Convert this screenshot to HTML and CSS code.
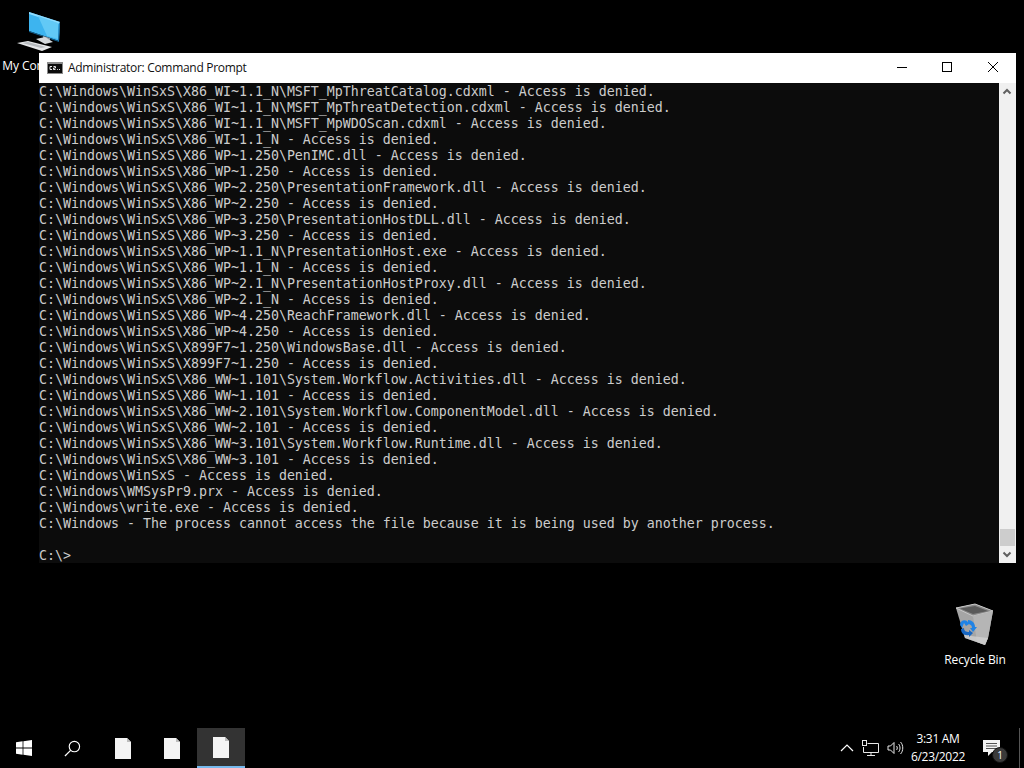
FILE: index.html
```html
<!DOCTYPE html>
<html lang="en">
<head>
<meta charset="utf-8">
<title>Administrator: Command Prompt</title>
<link rel="stylesheet" href="styles.css">
</head>
<body>
<main class="desktop">
  <div class="desk-icon pc-icon">
    <svg class="icon-img" width="48" height="42" viewBox="0 0 48 42">
      <polygon points="15,1 46,11 45,30 15,20" fill="#3db4ef"/>
      <polygon points="15,1 46,11 46,13 15,3" fill="#8fdcff"/>
      <polygon points="45,12 46,11 45,30 44,29" fill="#1c6fa5"/>
      <polygon points="15,20 45,30 45,31 15,21" fill="#14618f"/>
      <polygon points="24,5 44,12 44,28 33,25" fill="#62c9f6"/>
      <polygon points="29,25 36,27 36,29 29,28" fill="#8f9aa3"/>
      <polygon points="22,28 31,26 39,31 31,33" fill="#d5d9dc"/>
      <polygon points="3,32 14,30 38,36 28,40" fill="#e6e8ea"/>
      <polygon points="8,32 14,31 32,36 27,37" fill="#b8bcc0"/>
    </svg>
    <span class="icon-label">My Computer</span>
  </div>

  <div class="desk-icon bin-icon">
    <svg class="icon-img" width="44" height="46" viewBox="0 0 44 46">
      <polygon points="3,5 22,1 40,8 35,35 32,42 12,35" fill="#a5a5a5"/>
      <polygon points="3,5 22,1 40,8 20,13" fill="#8a8a8a" stroke="#c8c8c8"/>
      <polygon points="7,5.5 22,3 35,8 20,11" fill="#5a5a5a"/>
      <polygon points="20,13 40,8 35,35 32,42 24,39" fill="#b5b5b5"/>
      <polygon points="10,29 18,33 35,35 32,42 12,35" fill="#cfcfcf" opacity=".8"/>
      <path d="M7 22 C7 18 11 16 14 18 L16 21 L13 23 L11 20 L9 25 Z" fill="#1f83e6"/>
      <path d="M15 17 C19 17 22 20 22 24 L24 24 L20 29 L17 25 L19 25 C19 22 17 21 15 21 Z" fill="#1f83e6"/>
      <path d="M8 26 L11 25 C11 28 13 29 16 29 L16 27 L20 30 L16 34 L16 32 C11 33 8 30 8 26 Z" fill="#1666c2"/>
    </svg>
    <span class="icon-label">Recycle Bin</span>
  </div>

  <section class="window">
    <header class="titlebar">
      <svg class="cmd-icon" width="16" height="16" viewBox="0 0 16 16">
        <rect x="0" y="2" width="16" height="12" fill="#8a8a8a"/>
        <rect x="1" y="4" width="14" height="9" fill="#0c0c0c"/>
        <path d="M5 6.5H3v3h2M6.5 6.5h2V8h-2v1.5h2M10 9.5h0.8M12 9.5h1" fill="none" stroke="#e8e8e8" stroke-width="1"/>
      </svg>
      <span class="title">Administrator: Command Prompt</span>
      <div class="controls">
        <svg class="ctl" width="46" height="30" viewBox="0 0 46 30"><path d="M19 14.5H29" stroke="#000" fill="none"/></svg>
        <svg class="ctl" width="46" height="30" viewBox="0 0 46 30"><rect x="18.5" y="9.5" width="9" height="9" fill="none" stroke="#000"/></svg>
        <svg class="ctl" width="46" height="30" viewBox="0 0 46 30"><path d="M18 9L28 19M28 9L18 19" fill="none" stroke="#000"/></svg>
      </div>
    </header>
    <div class="client">
<pre class="console">C:\Windows\WinSxS\X86_WI~1.1_N\MSFT_MpThreatCatalog.cdxml - Access is denied.
C:\Windows\WinSxS\X86_WI~1.1_N\MSFT_MpThreatDetection.cdxml - Access is denied.
C:\Windows\WinSxS\X86_WI~1.1_N\MSFT_MpWDOScan.cdxml - Access is denied.
C:\Windows\WinSxS\X86_WI~1.1_N - Access is denied.
C:\Windows\WinSxS\X86_WP~1.250\PenIMC.dll - Access is denied.
C:\Windows\WinSxS\X86_WP~1.250 - Access is denied.
C:\Windows\WinSxS\X86_WP~2.250\PresentationFramework.dll - Access is denied.
C:\Windows\WinSxS\X86_WP~2.250 - Access is denied.
C:\Windows\WinSxS\X86_WP~3.250\PresentationHostDLL.dll - Access is denied.
C:\Windows\WinSxS\X86_WP~3.250 - Access is denied.
C:\Windows\WinSxS\X86_WP~1.1_N\PresentationHost.exe - Access is denied.
C:\Windows\WinSxS\X86_WP~1.1_N - Access is denied.
C:\Windows\WinSxS\X86_WP~2.1_N\PresentationHostProxy.dll - Access is denied.
C:\Windows\WinSxS\X86_WP~2.1_N - Access is denied.
C:\Windows\WinSxS\X86_WP~4.250\ReachFramework.dll - Access is denied.
C:\Windows\WinSxS\X86_WP~4.250 - Access is denied.
C:\Windows\WinSxS\X899F7~1.250\WindowsBase.dll - Access is denied.
C:\Windows\WinSxS\X899F7~1.250 - Access is denied.
C:\Windows\WinSxS\X86_WW~1.101\System.Workflow.Activities.dll - Access is denied.
C:\Windows\WinSxS\X86_WW~1.101 - Access is denied.
C:\Windows\WinSxS\X86_WW~2.101\System.Workflow.ComponentModel.dll - Access is denied.
C:\Windows\WinSxS\X86_WW~2.101 - Access is denied.
C:\Windows\WinSxS\X86_WW~3.101\System.Workflow.Runtime.dll - Access is denied.
C:\Windows\WinSxS\X86_WW~3.101 - Access is denied.
C:\Windows\WinSxS - Access is denied.
C:\Windows\WMSysPr9.prx - Access is denied.
C:\Windows\write.exe - Access is denied.
C:\Windows - The process cannot access the file because it is being used by another process.

C:\&gt;</pre>
      <div class="scrollbar">
        <svg class="arrow" width="17" height="17" viewBox="0 0 17 17"><path d="M4.5 10.5L8 7L11.5 10.5" fill="none" stroke="#606060" stroke-width="2"/></svg>
        <div class="track"><div class="thumb"></div></div>
        <svg class="arrow" width="17" height="17" viewBox="0 0 17 17"><path d="M4.5 6.5L8 10L11.5 6.5" fill="none" stroke="#606060" stroke-width="2"/></svg>
      </div>
    </div>
  </section>
</main>

<footer class="taskbar">
  <div class="task-btn start">
    <svg width="16" height="16" viewBox="0 0 16 16"><path d="M0 2.3L6.6 1.3V7.6H0ZM7.4 1.2L16 0V7.6H7.4ZM0 8.4H6.6V14.7L0 13.7ZM7.4 8.4H16V16L7.4 14.8Z" fill="#fff"/></svg>
  </div>
  <div class="task-btn search">
    <svg class="search-ico" width="17" height="17" viewBox="0 0 18 18"><circle cx="11" cy="7" r="5.5" fill="none" stroke="#fff" stroke-width="1.2"/><path d="M7 11L1 17" stroke="#fff" stroke-width="1.3"/></svg>
  </div>
  <div class="task-btn app">
    <svg class="doc" width="16" height="21" viewBox="0 0 16 21"><path d="M0 0H12L16 4V21H0Z" fill="#f4f4f4"/><path d="M12 0V4H16" fill="#bdbdbd"/></svg>
  </div>
  <div class="task-btn app">
    <svg class="doc" width="16" height="21" viewBox="0 0 16 21"><path d="M0 0H12L16 4V21H0Z" fill="#f4f4f4"/><path d="M12 0V4H16" fill="#bdbdbd"/></svg>
  </div>
  <div class="task-btn app active">
    <svg class="doc" width="16" height="21" viewBox="0 0 16 21"><path d="M0 0H12L16 4V21H0Z" fill="#f4f4f4"/><path d="M12 0V4H16" fill="#bdbdbd"/></svg>
  </div>

  <div class="tray">
    <svg class="tray-ico" width="14" height="10" viewBox="0 0 14 10"><path d="M1 8L7 2L13 8" fill="none" stroke="#fff" stroke-width="1.2"/></svg>
    <svg class="tray-ico" width="17" height="16" viewBox="0 0 17 16"><path d="M5.5 3.5H16.5V12.5H1.5V7" fill="none" stroke="#e8e8e8"/><rect x="0.5" y="0.5" width="4" height="5" fill="#000" stroke="#e8e8e8"/><path d="M9 13V15M5 15.5H13" stroke="#e8e8e8"/></svg>
    <svg class="tray-ico" width="17" height="14" viewBox="0 0 17 14"><path d="M1 5H3.5L7 1.5V12.5L3.5 9H1Z" fill="none" stroke="#e8e8e8"/><path d="M9.5 5C10.5 6 10.5 8 9.5 9M11.5 3C13.5 5 13.5 9 11.5 11M13.5 1C16.5 4 16.5 10 13.5 13" fill="none" stroke="#e8e8e8"/></svg>
    <div class="clock"><span>3:31 AM</span><span>6/23/2022</span></div>
    <div class="notify">
      <svg width="17" height="16" viewBox="0 0 17 16"><path d="M0 0H17V12H9L5 16V12H0Z" fill="#f4f4f4"/><path d="M3 3.5H14M3 6H14M3 8.5H14" stroke="#555"/></svg>
      <span class="badge">1</span>
    </div>
    <div class="show-desktop"></div>
  </div>
</footer>
</body>
</html>
```

FILE: styles.css
```css
* { box-sizing: border-box; }
html, body { height: 100%; }
body {
  margin: 0;
  width: 1024px;
  height: 768px;
  overflow: hidden;
  background: #000;
  display: flex;
  flex-direction: column;
  font-family: "Open Sans", "Noto Sans", "Liberation Sans", sans-serif;
  color: #fff;
}
.desktop { position: relative; flex: 1; }

.desk-icon {
  position: absolute;
  display: flex;
  flex-direction: column;
  align-items: center;
  width: 76px;
}
.pc-icon { left: 2px; top: 11px; }
.bin-icon { left: 937px; top: 603px; }
.icon-label {
  font-size: 12px;
  line-height: 16px;
  white-space: nowrap;
  color: #fff;
  letter-spacing: -0.1px;
}
.pc-icon .icon-img { margin-left: -4px; }
.pc-icon .icon-label { margin-top: 5px; }
.bin-icon .icon-label { margin-top: 3px; }

.window {
  position: absolute;
  left: 39px;
  top: 53px;
  width: 977px;
  height: 510px;
  display: flex;
  flex-direction: column;
  background: #fff;
}
.titlebar {
  height: 30px;
  display: flex;
  align-items: center;
  padding-left: 8px;
  background: #fff;
  color: #000;
}
.cmd-icon { flex: none; }
.title {
  margin-left: 5px;
  margin-top: -2px;
  font-size: 12px;
  letter-spacing: -0.3px;
  color: #111;
  flex: 1;
}
.controls { display: flex; }
.ctl { display: block; }

.client { flex: 1; display: flex; min-height: 0; }
.console {
  flex: 1;
  margin: 0;
  padding: 1px 0 0;
  background: #0c0c0c;
  color: #cccccc;
  font-family: "DejaVu Sans Mono", "Liberation Mono", monospace;
  font-size: 13.29px;
  line-height: 16px;
  overflow: hidden;
}
.scrollbar {
  width: 17px;
  flex: none;
  background: #f0f0f0;
  display: flex;
  flex-direction: column;
}
.arrow { display: block; flex: none; }
.track { flex: 1; display: flex; flex-direction: column; justify-content: flex-end; }
.thumb { height: 17px; margin: 0 1px; background: #cdcdcd; }

.taskbar {
  height: 40px;
  flex: none;
  background: #000;
  display: flex;
  align-items: stretch;
}
.task-btn {
  width: 48px;
  margin-right: 1px;
  display: flex;
  align-items: center;
  justify-content: center;
}
.search { width: 49px; justify-content: flex-start; padding-left: 15px; }
.doc { margin-left: -1px; }
.active {
  background: #333;
  border-bottom: 2px solid #76b9ed;
}
.tray {
  margin-left: auto;
  display: flex;
  align-items: center;
  color: #fff;
}
.tray-ico { display: block; margin-right: 8px; }
.tray-ico:nth-child(3) { margin-right: 3px; }
.clock {
  display: flex;
  flex-direction: column;
  align-items: center;
  width: 62px;
  font-size: 12px;
  letter-spacing: -0.3px;
  line-height: 18px;
}
.notify {
  position: relative;
  width: 50px;
  padding-left: 14px;
  height: 100%;
  display: flex;
  align-items: center;
}
.badge {
  position: absolute;
  left: 23px;
  top: 19px;
  width: 16px;
  height: 16px;
  border-radius: 50%;
  background: #3a3a3a;
  border: 1px solid #111;
  font-size: 10px;
  line-height: 14px;
  text-align: center;
}
.show-desktop {
  width: 5px;
  height: 100%;
  border-left: 1px solid #555;
}
```
